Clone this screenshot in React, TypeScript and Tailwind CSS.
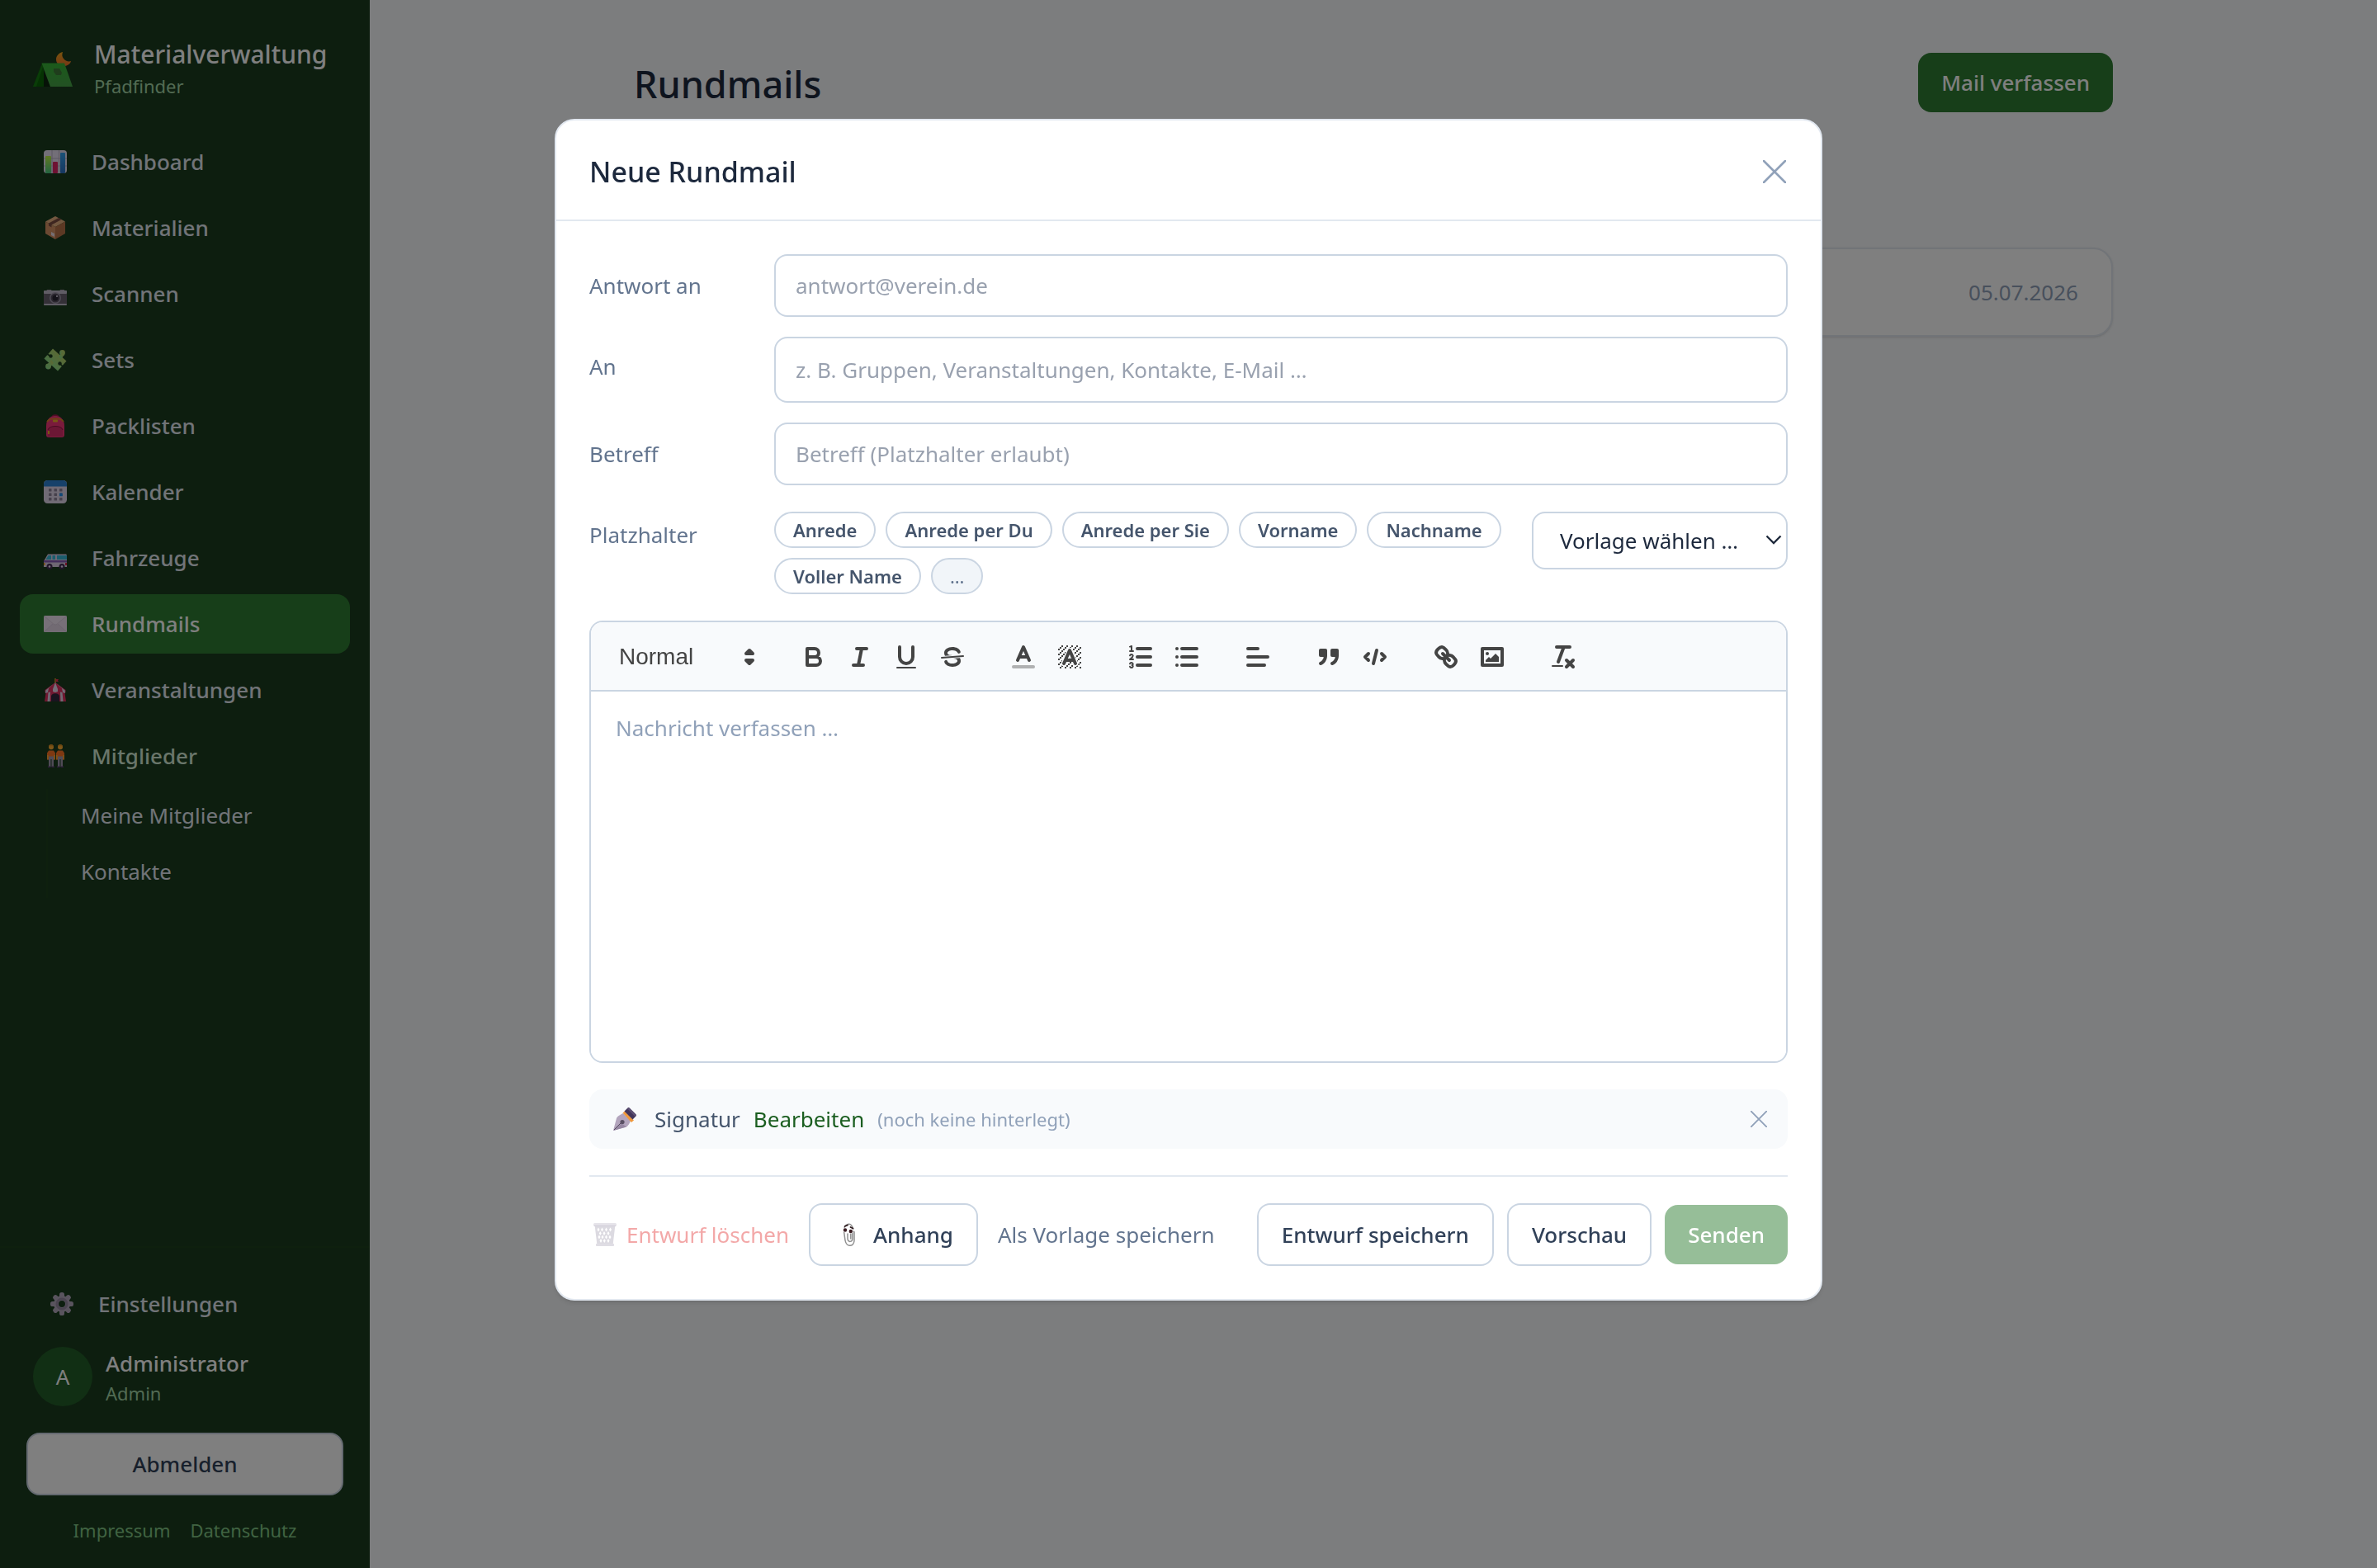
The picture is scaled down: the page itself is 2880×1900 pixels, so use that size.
import React from "react";

/* ---------- Emoji-style pictograms ---------- */

function Pic({ children, className = "size-7" }: { children: React.ReactNode; className?: string }) {
  return (
    <svg viewBox="0 0 28 28" className={className + " shrink-0"} aria-hidden="true">
      {children}
    </svg>
  );
}

const TentLogo = () => (
  <svg viewBox="0 0 48 42" className="h-[42px] w-12 shrink-0" aria-hidden="true">
    <defs>
      <linearGradient id="tentRoof" x1="0" y1="0" x2="0" y2="1">
        <stop offset="0" stopColor="#36b536" />
        <stop offset="1" stopColor="#47a348" />
      </linearGradient>
      <linearGradient id="tentMoon" x1="0" y1="0" x2="0" y2="1">
        <stop offset="0" stopColor="#f0a81c" />
        <stop offset="1" stopColor="#f0702c" />
      </linearGradient>
    </defs>
    <path d="M36 0C31 1 28 5 28 9c0 5 4 8 9 8 4 0 8-2 9-6-3 1-7 0-9-3-2-2-2-5-1-8Z" fill="url(#tentMoon)" />
    <path d="M11 14 0 42h13V22Z" fill="#0a6406" />
    <path d="M11 14 0 42h4l8-24Z" fill="#147a10" />
    <path d="M13 22v20h8Z" fill="#0c240e" />
    <path d="M10.500 13.500H38L48 42H21Z" fill="url(#tentRoof)" />
    <path d="M25 20h7l3 5-1 3h-6l-3-4Z" fill="#3f7a38" />
  </svg>
);

const ChartPic = () => (
  <Pic>
    <defs>
      <linearGradient id="barGreen" x1="0" y1="0" x2="0" y2="1">
        <stop offset="0" stopColor="#a6d13c" />
        <stop offset="1" stopColor="#3fae72" />
      </linearGradient>
      <linearGradient id="barBlue" x1="0" y1="0" x2="0" y2="1">
        <stop offset="0" stopColor="#2d8fd0" />
        <stop offset="1" stopColor="#2660a8" />
      </linearGradient>
    </defs>
    <rect width="28" height="28" rx="4" fill="#c9c1d1" />
    <path d="M0 10h28M0 19h28M10 0v28M18.500 0v28" stroke="#a099ab" strokeWidth="1" />
    <rect x="2" y="7" width="7" height="21" rx="1" fill="url(#barGreen)" />
    <rect x="11" y="14" width="6" height="14" rx="1" fill="#c01f58" />
    <rect x="20" y="3" width="6" height="25" rx="1" fill="url(#barBlue)" />
  </Pic>
);

const BoxPic = () => (
  <Pic>
    <path d="M14 0 26 6.500 14 13 2 6.500Z" fill="#c99a70" />
    <path d="M2 6.500 14 13v15L2 21Z" fill="#bb8058" />
    <path d="M26 6.500 14 13v15l12-7Z" fill="#a0643f" />
    <path d="m18 2 3.500 2L9.500 10.500v3L6 11.500v-3Z" fill="#6d4238" />
    <path d="m9 19 4 2v4l-4-2Z" fill="#ccc0c6" />
  </Pic>
);

const CameraPic = () => (
  <Pic>
    <path d="M4 9h5l1 2H3ZM20 9h5v2h-6Z" fill="#8d8794" />
    <rect y="10" width="28" height="18" rx="1.500" fill="#5a5460" />
    <rect y="10" width="28" height="4" rx="1" fill="#a8a2b0" />
    <rect y="26" width="28" height="2" rx="1" fill="#a8a2b0" />
    <circle cx="14" cy="19" r="7" fill="#8b8494" />
    <circle cx="14" cy="19" r="5.500" fill="#4b4552" />
    <circle cx="14" cy="19" r="3.500" fill="#24202c" />
    <circle cx="16" cy="17" r="1" fill="#c9c2d2" />
  </Pic>
);

const PuzzlePic = () => (
  <Pic>
    <defs>
      <linearGradient id="puzzle" x1="1" y1="0" x2="0" y2="1">
        <stop offset="0" stopColor="#b0b04c" />
        <stop offset="1" stopColor="#68c886" />
      </linearGradient>
      <mask id="puzzleCut">
        <rect width="28" height="28" fill="#fff" />
        <circle cx="8.500" cy="9.500" r="2.200" fill="#000" />
        <circle cx="19.500" cy="18.500" r="2.200" fill="#000" />
        <path d="m4 7 5 3M23 22l-4-4" stroke="#000" strokeWidth="1.600" />
      </mask>
    </defs>
    <g mask="url(#puzzleCut)" fill="url(#puzzle)">
      <path d="M11 0.500 27.500 15.500 17 27.500 0.500 12.500Z" />
      <circle cx="22.500" cy="5.500" r="3.400" />
      <path d="m18 10 4-5 3 3-4 5Z" />
      <circle cx="5.500" cy="22" r="3.400" />
      <path d="m4 20 5-6 3 4-5 6Z" />
    </g>
  </Pic>
);

const BackpackPic = () => (
  <Pic>
    <path d="M10 5c0-5 8-5 8 0" fill="none" stroke="#8c1740" strokeWidth="2" />
    <path d="M3 14C3 6 8 2 14 2s11 4 11 12v11c0 2-1 3-3 3H6c-2 0-3-1-3-3Z" fill="#d42f68" />
    <path d="M4 9c3-5 17-5 20 0" fill="none" stroke="#c07a1e" strokeWidth="1.500" />
    <path d="M5 27V20c0-7 18-7 18 0v7Z" fill="#bd285c" />
    <path d="M5 19c1-6 17-6 18 0" fill="none" stroke="#7c1438" strokeWidth="1" />
    <rect x="11" y="6.500" width="6" height="3" rx="1" fill="#d39a22" />
    <rect x="5" y="20" width="2" height="4" fill="#d39a22" />
  </Pic>
);

const CalendarPic = () => (
  <Pic>
    <rect width="28" height="28" rx="4.500" fill="#c4bacc" />
    <path d="M4.500 0h19A4.500 4.500 0 0 1 28 4.500V7.500H0v-3A4.500 4.500 0 0 1 4.500 0Z" fill="#2672b8" />
    <g fill="#7c7486">
      {[6, 12.5, 19].map((x) => [10, 15.5, 21].map((y) => <rect key={x + "-" + y} x={x} y={y} width="3.500" height="3.500" rx=".6" />))}
    </g>
    <rect x="19" y="15.500" width="3.800" height="3.800" rx=".6" fill="#1f7fd0" />
  </Pic>
);

const VanPic = () => (
  <Pic>
    <path d="M5 9.500h22l1 1V25H0v-7Z" fill="#c0b4c9" />
    <path d="M5.500 11H9v5H2.500ZM10.500 11H14v5h-3.500ZM16 11h12v5H16Z" fill="#2fa3bd" />
    <path d="M0 17h28v2.500H0Z" fill="#7650a0" />
    <rect x="26" y="20" width="2" height="3" fill="#c02040" />
    <rect x="0" y="20" width="1.500" height="3" fill="#d08a20" />
    <circle cx="7" cy="24.500" r="3.500" fill="#3a2648" />
    <circle cx="7" cy="24.500" r="1.300" fill="#c9bfd2" />
    <circle cx="22" cy="24.500" r="3.500" fill="#3a2648" />
    <circle cx="22" cy="24.500" r="1.300" fill="#c9bfd2" />
  </Pic>
);

const MailPic = () => (
  <Pic>
    <rect y="4" width="28" height="20" rx="1.500" fill="#cfc3d1" />
    <path d="m0 23.500 10-9h8l10 9Z" fill="#c6bac9" />
    <path d="M.500 4.500 12 14.200c1.500 1 2.500 1 4 0L27.500 4.500" fill="#d3c8d5" stroke="#aea2b3" strokeWidth=".5" />
    <path d="m1 23 10-9M27 23l-10-9" stroke="#b5a9bb" strokeWidth=".5" />
  </Pic>
);

const CircusPic = () => (
  <Pic>
    <path d="M14 0v7" stroke="#c08a20" strokeWidth="1.500" />
    <path d="M14.500 1 18 1l-1 1.500 1 1.500h-3.500Z" fill="#c8284a" />
    <path d="M14 5 26.500 14v3l-1 1L27 28H1l1.500-10-1-1v-3Z" fill="#c42b54" />
    <path d="m14 5-8 7-1 5-3 1 .3-3.500ZM14 5l8 7 1 5 3 1-.3-3.500Z" fill="#c4bacb" />
    <path d="m14 5-3 8v3l3 1 3-1v-3Z" fill="#c9bfd0" />
    <path d="M5.500 17 8 16.500 7.500 28h-3ZM22.500 17l-2.500-.5L20.500 28h3Z" fill="#c4bacb" />
    <path d="M9 28v-6c0-5 10-5 10 0v6Z" fill="#2c2336" />
  </Pic>
);

const PeoplePic = () => (
  <Pic>
    {[9, 20].map((x) => (
      <g key={x} transform={`translate(${x} 0)`}>
        <circle cy="3.200" r="3" fill="#dc962c" />
        <path d="M-3 3c0-4 6-4 6 0l-1-.8h-4Z" fill="#c4801e" />
        <path d="M-3 7.500h6l2 3v8h-2v-3h-6v3h-2v-8Z" fill="#dc6420" />
        <path d="M-5 13h1.600v5.500H-4.600ZM3.400 13H5l-.4 5.500H3.400Z" fill="#dc962c" />
        <path d="M-3 14.500h6V27H.5V18h-1v9H-3Z" fill="#8a8296" />
        <path d="M-4 26.500h3.500V28H-4ZM.5 26.500H4V28H.5Z" fill="#4b3460" />
      </g>
    ))}
  </Pic>
);

const GearPic = () => (
  <Pic>
    <g fill="#b3a9bd">
      {[0, 45, 90, 135, 180, 225, 270, 315].map((a) => (
        <rect key={a} x="11" y="0" width="6" height="9" rx="2.600" transform={`rotate(${a} 14 14)`} />
      ))}
    </g>
    <circle cx="14" cy="14" r="7" fill="none" stroke="#b3a9bd" strokeWidth="6" />
    <circle cx="14" cy="14" r="6" fill="none" stroke="#9589a1" strokeWidth="3" />
  </Pic>
);

const PenPic = () => (
  <Pic>
    <path d="M0 28 4 13c.5-2 5-4.500 8-6l9 9c-1 3-3 6.500-5 7.500Z" fill="#b3a5bd" />
    <path d="m0 28 10-9 6 4.500Z" fill="#9788a3" />
    <path d="m1 27 8.500-8.500" stroke="#544960" strokeWidth="1" />
    <circle cx="11" cy="17.500" r="2.600" fill="#5a5064" />
    <path d="m11.500 6.500 2.500-2 11 11-3 2.500Z" fill="#f0983c" />
    <path d="m13.500 4.500 4-4c.8-.7 1.600-.6 2.200 0l7.800 7.800c.6.700.6 1.500 0 2.200l-4 4Z" fill="#43365c" />
    <path d="m17 1.500 9.500 9.500 1-1.500-8.500-9Z" fill="#5f5276" />
  </Pic>
);

const TrashPic = () => (
  <Pic>
    <path d="M1.500 2h25L23.500 27c-.1.600-.6 1-1.200 1H5.700c-.6 0-1.100-.4-1.200-1Z" fill="#dcdae1" />
    <g fill="#fff">
      {[
        [6, 8], [10.5, 8], [15.5, 8], [20.5, 8],
        [8.3, 12.5], [13, 12.5], [18, 12.5],
        [7, 17], [11, 17], [15.5, 17], [20, 17],
        [9, 21.5], [13.3, 21.5], [18, 21.5],
      ].map(([x, y]) => (
        <path key={x + "-" + y} d={`M${x} ${y - 2.6}l1.500 2.600-1.500 2.600-1.500-2.600Z`} />
      ))}
    </g>
    <rect x="0" y="0" width="28" height="4" rx="1.500" fill="#e6e4ea" />
    <rect x="1" y="2.800" width="26" height="1" fill="#cfccd6" />
    <rect x="3" y="25" width="22" height="3" rx="1" fill="#dfdde4" />
  </Pic>
);

const ClipPic = () => (
  <Pic className="mx-1 size-7">
    <g fill="none" stroke="#8f8f8f" strokeWidth="1.500" strokeLinecap="round">
      <path d="M9 10c-1-10 9-12 10.500-3M8.500 10l1.500 11c1.500 9 11.500 8 11-1V11c-.3-1.500-2-1.500-2.200 0v8c0 4-5.300 5-5.800 0v-6" />
      <path d="M16.800 12v7" />
    </g>
    <path d="m9.500 4 3.500-1.500M16.500 5l3 1.500" stroke="#2d1b1e" strokeWidth="1.800" strokeLinecap="round" />
    <circle cx="10" cy="8.500" r="2.800" fill="#fff" />
    <circle cx="10" cy="8.500" r="2.200" fill="#3a1d22" />
    <circle cx="16.800" cy="10" r="2.800" fill="#fff" />
    <circle cx="16.800" cy="10" r="2.200" fill="#3a1d22" />
  </Pic>
);

const CrossIcon = ({ className }: { className: string }) => (
  <svg viewBox="0 0 28 28" className={className} aria-hidden="true">
    <path d="M1 1 27 27M27 1 1 27" stroke="currentColor" strokeWidth="2.600" strokeLinecap="round" />
  </svg>
);

/* ---------- Editor toolbar icons ---------- */

function Tool({ label, children }: { label: string; children: React.ReactNode }) {
  return (
    <button type="button" aria-label={label} className="flex h-12 w-14 items-center justify-center text-[#444]">
      <svg
        viewBox="0 0 18 18"
        className="size-9"
        fill="none"
        stroke="currentColor"
        strokeWidth="2"
        strokeLinecap="round"
        strokeLinejoin="round"
        aria-hidden="true"
      >
        {children}
      </svg>
    </button>
  );
}

const solid = { fill: "currentColor", stroke: "none" } as const;

function Toolbar() {
  return (
    <div className="flex flex-wrap items-center gap-x-[30px] border-b-2 border-slate-300 bg-slate-50 px-4 pt-[18px] pb-4">
      <button
        type="button"
        className="flex h-12 w-[196px] items-center justify-between pr-0.5 pl-[18px] font-['Liberation_Sans',sans-serif] text-[28px] text-[#444]"
      >
        Normal
        <svg viewBox="0 0 18 18" className="size-9" fill="currentColor" stroke="currentColor" strokeWidth="2" strokeLinejoin="round" aria-hidden="true">
          <path d="M7 11 9 13 11 11ZM7 7 9 5 11 7Z" />
        </svg>
      </button>
      <div className="flex">
        <Tool label="Fett">
          <path d="M5 4H9.500A2.500 2.500 0 0 1 9.500 9H5ZM5 9h5.500a2.500 2.500 0 0 1 0 5H5Z" />
        </Tool>
        <Tool label="Kursiv">
          <path d="M7 4H13M5 14H11M8 14 10 4" />
        </Tool>
        <Tool label="Unterstrichen">
          <path d="M5 3V9a4 4 0 0 0 8 0V3" />
          <rect x="3" y="15" width="12" height="1" rx=".5" {...solid} />
        </Tool>
        <Tool label="Durchgestrichen">
          <path d="M15.500 8.500 2.500 9.500" strokeWidth="1" />
          <path
            {...solid}
            d="M9.007,8C6.542,7.791,6,7.519,6,6.500,6,5.792,7.283,5,9,5c1.571,0,2.765.679,2.969,1.309a1,1,0,0,0,1.900-.617C13.356,4.106,11.354,3,9,3,6.200,3,4,4.538,4,6.500a3.200,3.200,0,0,0,.5,1.843Z"
          />
          <path
            {...solid}
            d="M8.984,10C11.457,10.208,12,10.479,12,11.500c0,0.708-1.283,1.500-3,1.500-1.571,0-2.765-.679-2.969-1.309a1,1,0,1,0-1.900.617C4.644,13.894,6.646,15,9,15c2.800,0,5-1.538,5-3.500a3.200,3.200,0,0,0-.5-1.843Z"
          />
        </Tool>
      </div>
      <div className="flex">
        <Tool label="Textfarbe">
          <path d="M3 15H15" opacity=".4" />
          <path d="M5.500 11 9 3 12.500 11M11.630 9H6.380" />
        </Tool>
        <Tool label="Hintergrundfarbe">
          <defs>
            <pattern id="hatch" width="3" height="3" patternUnits="userSpaceOnUse" x="2" y="2">
              <path d="M2 0h1v1h-1ZM1 1h1v1h-1ZM0 2h1v1h-1Z" fill="#444" stroke="none" />
            </pattern>
          </defs>
          <rect x="2" y="2" width="14" height="14" fill="url(#hatch)" stroke="none" />
          <path d="M5.500 13 9 5 12.500 13" stroke="#f8fafc" strokeWidth="3.400" />
          <path d="M5.500 13 9 5 12.500 13M11.630 11H6.380" />
        </Tool>
      </div>
      <div className="flex">
        <Tool label="Nummerierte Liste">
          <path d="M7 4H15M7 9H15M7 14H15" />
          <path d="M2.500 5.500H4.500" strokeWidth="1" />
          <path
            {...solid}
            d="M3.500,6A0.500,0.500,0,0,1,3,5.500V3.085l-0.276.138A0.500,0.500,0,0,1,2.053,3c-0.124-.247-0.023-0.324.224-0.447l1-.5A0.500,0.500,0,0,1,4,2.500v3A0.500,0.500,0,0,1,3.500,6Z"
          />
          <path
            strokeWidth="1"
            d="M4.500,10.500h-2c0-.234,1.850-1.076,1.850-2.234A0.959,0.959,0,0,0,2.500,8.156M2.500,14.846a0.959,0.959,0,0,0,1.850-.109A0.700,0.700,0,0,0,3.750,14a0.688,0.688,0,0,0,.6-0.736,0.959,0.959,0,0,0-1.850-.109"
          />
        </Tool>
        <Tool label="Aufzählung">
          <path d="M6 4H15M6 9H15M6 14H15M3 4H3M3 9H3M3 14H3" />
        </Tool>
      </div>
      <Tool label="Ausrichtung">
        <path d="M3 9H15M3 14H13M3 4H9" />
      </Tool>
      <div className="flex">
        <Tool label="Zitat">
          <path fill="currentColor" d="M4 5h3v3H4ZM11 5h3v3h-3Z" />
          <path d="M7 8c0 4.031-3 5-3 5M14 8c0 4.031-3 5-3 5" />
        </Tool>
        <Tool label="Code">
          <path d="M5 7 3 9 5 11M13 7 15 9 13 11M10 5 8 13" />
        </Tool>
      </div>
      <div className="flex">
        <Tool label="Link">
          <path d="M7 7 11 11" />
          <path d="M8.900,4.577a3.476,3.476,0,0,1,.36,4.679A3.476,3.476,0,0,1,4.577,8.900C3.185,7.500,2.035,6.400,4.217,4.217S7.500,3.185,8.900,4.577Z" />
          <path d="M13.423,9.100a3.476,3.476,0,0,0-4.679-.36,3.476,3.476,0,0,0,.36,4.679c1.392,1.392,2.500,2.542,4.679.36S14.815,10.500,13.423,9.100Z" />
        </Tool>
        <Tool label="Bild">
          <rect x="3" y="4" width="12" height="10" />
          <circle cx="6" cy="7" r="1" {...solid} />
          <path {...solid} d="M5 12V11L7 9 8 10 11 7 13 9V12Z" />
        </Tool>
      </div>
      <Tool label="Formatierung entfernen">
        <path d="M5 3H13M6 12 9.350 3M11 11 15 15M15 11 11 15" />
        <rect x="2" y="14" width="7" height="1" rx=".5" {...solid} />
      </Tool>
    </div>
  );
}

/* ---------- Page ---------- */

const nav = [
  { label: "Dashboard", icon: <ChartPic /> },
  { label: "Materialien", icon: <BoxPic /> },
  { label: "Scannen", icon: <CameraPic /> },
  { label: "Sets", icon: <PuzzlePic /> },
  { label: "Packlisten", icon: <BackpackPic /> },
  { label: "Kalender", icon: <CalendarPic /> },
  { label: "Fahrzeuge", icon: <VanPic /> },
  { label: "Rundmails", icon: <MailPic />, tone: "bg-[#2e7d32] text-white" },
  { label: "Veranstaltungen", icon: <CircusPic /> },
  { label: "Mitglieder", icon: <PeoplePic />, tone: "text-[#d5ecd6]" },
];

function Sidebar() {
  return (
    <aside className="flex min-h-screen w-[448px] shrink-0 flex-col bg-[#1a3c1f]">
      <div className="flex items-center gap-[26px] px-10 pt-[46px] pb-[38px]">
        <TentLogo />
        <div>
          <div className="text-[30px] leading-10 font-[550] text-white">Materialverwaltung</div>
          <div className="text-[22px] leading-9 text-[#a5d6a7]">Pfadfinder</div>
        </div>
      </div>
      <nav className="flex flex-col gap-2 px-6">
        {nav.map((n) => (
          <a
            key={n.label}
            href="#"
            className={"flex h-[72px] items-center gap-[30px] rounded-2xl px-[29px] font-[550] " + (n.tone ?? "text-slate-200")}
          >
            <span className="brightness-115">{n.icon}</span>
            {n.label}
          </a>
        ))}
      </nav>
      <div className="mt-1 ml-14 flex flex-col gap-1 border-l-2 border-[#1d401d] text-slate-200">
        <a href="#" className="flex h-16 items-center pl-10">
          Meine Mitglieder
        </a>
        <a href="#" className="flex h-16 items-center pl-10">
          Kontakte
        </a>
      </div>
      <div className="mt-auto border-t-2 border-[#1d401d] px-8 pt-8 pb-7">
        <a href="#" className="flex h-[72px] items-center gap-[30px] px-[29px] font-[550] text-slate-200">
          <GearPic />
          Einstellungen
        </a>
        <div className="mt-4 flex items-center gap-4 px-2">
          <div className="flex size-[72px] items-center justify-center rounded-full bg-[#235e28] text-white">A</div>
          <div>
            <div className="leading-10 font-[550] text-white">Administrator</div>
            <div className="text-[22px] leading-8 text-[#a5d6a7]">Admin</div>
          </div>
        </div>
        <button type="button" className="mt-8 h-[76px] w-full rounded-2xl border-2 border-slate-300 bg-white font-[550] text-slate-700">
          Abmelden
        </button>
        <div className="mt-6 flex justify-center gap-6 text-[22px] leading-9 text-[#81c784]">
          <a href="#">Impressum</a>
          <a href="#">Datenschutz</a>
        </div>
      </div>
    </aside>
  );
}

const chips = ["Anrede", "Anrede per Du", "Anrede per Sie", "Vorname", "Nachname", "Voller Name"];
const field =
  "w-full rounded-2xl border-2 border-slate-300 bg-white px-6 text-slate-800 outline-none placeholder:text-gray-400 placeholder:opacity-100";
const outlineButton =
  "flex h-[76px] items-center justify-center rounded-2xl border-2 border-slate-300 bg-white px-7 font-[550] text-slate-700";

function Composer() {
  return (
    <div
      role="dialog"
      aria-modal="true"
      aria-labelledby="composer-title"
      className="w-full max-w-[1536px] rounded-3xl border-2 border-slate-200 bg-white shadow-md"
    >
      <header className="flex h-[122px] items-center justify-between border-b-2 border-slate-200 px-10 pt-1">
        <h2 id="composer-title" className="text-[34px] font-[550] text-slate-800">
          Neue Rundmail
        </h2>
        <button type="button" aria-label="Schließen" className="p-0.5 text-slate-400">
          <CrossIcon className="size-7" />
        </button>
      </header>
      <form className="p-10">
        <div className="grid grid-cols-[200px_1fr] gap-6 text-slate-500">
          <label htmlFor="reply" className="self-center">
            Antwort an
          </label>
          <input id="reply" type="email" placeholder="antwort@verein.de" className={field + " h-[76px]"} />
          <label htmlFor="to" className="pt-4 leading-10">
            An
          </label>
          <input id="to" placeholder="z. B. Gruppen, Veranstaltungen, Kontakte, E-Mail …" className={field + " h-20"} />
          <label htmlFor="subject" className="self-center">
            Betreff
          </label>
          <input id="subject" placeholder="Betreff (Platzhalter erlaubt)" className={field + " h-[76px]"} />
        </div>
        <div className="mt-8 grid grid-cols-[200px_1fr_auto] gap-x-6 text-slate-500">
          <div className="pt-2 leading-10">Platzhalter</div>
          <div className="flex flex-wrap content-start gap-3 text-[22px] font-semibold text-slate-600">
            {chips.map((c) => (
              <button key={c} type="button" className="h-11 rounded-full border-2 border-slate-300 bg-white px-[21px]">
                {c}
              </button>
            ))}
            <button type="button" className="h-11 rounded-full border-2 border-slate-300 bg-slate-100 px-[21px] font-normal text-slate-500">
              …
            </button>
          </div>
          <div className="relative h-[70px] w-[310px]">
            <select
              aria-label="Vorlage"
              className="h-full w-full appearance-none rounded-2xl border-2 border-slate-300 bg-white pl-8 text-slate-800"
            >
              <option>Vorlage wählen …</option>
            </select>
            <svg viewBox="0 0 20 12" className="pointer-events-none absolute top-7 right-[7px] h-3 w-5" aria-hidden="true">
              <path d="m1.500 1.500 8.500 8.500 8.500-8.500" fill="none" stroke="#1e293b" strokeWidth="2.300" />
            </svg>
          </div>
        </div>
        <div className="mt-8 overflow-hidden rounded-2xl border-2 border-slate-300">
          <Toolbar />
          <textarea
            aria-label="Nachricht"
            placeholder="Nachricht verfassen …"
            className="block h-[448px] w-full resize-none bg-white px-[30px] py-6 leading-10 text-slate-800 outline-none placeholder:text-slate-400 placeholder:opacity-100"
          />
        </div>
        <div className="mt-8 flex h-[72px] items-center rounded-2xl bg-slate-50 pr-[25px] pl-[29px]">
          <PenPic />
          <span className="ml-[22px] text-slate-600">Signatur</span>
          <button type="button" className="ml-4 text-[#1b5e20]">
            Bearbeiten
          </button>
          <span className="ml-4 text-[22px] text-slate-400">(noch keine hinterlegt)</span>
          <button type="button" aria-label="Signatur entfernen" className="ml-auto text-slate-400">
            <CrossIcon className="size-5" />
          </button>
        </div>
        <footer className="mt-8 flex items-center border-t-2 border-slate-200 pt-8">
          <button type="button" disabled className="flex items-center gap-3 pl-[5px] text-[#f3a8a8]">
            <TrashPic />
            Entwurf löschen
          </button>
          <button type="button" className={outlineButton + " ml-6 gap-3"}>
            <ClipPic />
            Anhang
          </button>
          <button type="button" className="ml-6 text-slate-500">
            Als Vorlage speichern
          </button>
          <div className="ml-auto flex items-center gap-4">
            <button type="button" className={outlineButton}>
              Entwurf speichern
            </button>
            <button type="button" className={outlineButton}>
              Vorschau
            </button>
            <button type="submit" disabled className="h-[72px] rounded-2xl bg-[#96be98] px-7 font-[550] text-white">
              Senden
            </button>
          </div>
        </footer>
      </form>
    </div>
  );
}

export default function App() {
  return (
    <div className="flex min-h-screen bg-slate-50 font-['Noto_Sans',sans-serif] text-[26px]">
      <Sidebar />
      <main className="flex-1 p-16">
        <div className="mx-auto max-w-[1792px]">
          <div className="flex items-start justify-between">
            <h1 className="pt-1 text-[45px] leading-[68px] font-[550] text-slate-800">Rundmails</h1>
            <button type="button" className="h-[72px] rounded-2xl bg-[#2e7d32] px-7 font-[550] text-white">
              Mail verfassen
            </button>
          </div>
          <article className="mt-[164px] flex h-[108px] items-center justify-end rounded-3xl border-2 border-slate-200 bg-white px-10 text-slate-400 shadow-sm">
            <time dateTime="2026-07-05">05.07.2026</time>
          </article>
        </div>
      </main>
      <div className="fixed inset-0 flex items-start justify-center overflow-y-auto bg-black/50 py-36">
        <Composer />
      </div>
    </div>
  );
}
